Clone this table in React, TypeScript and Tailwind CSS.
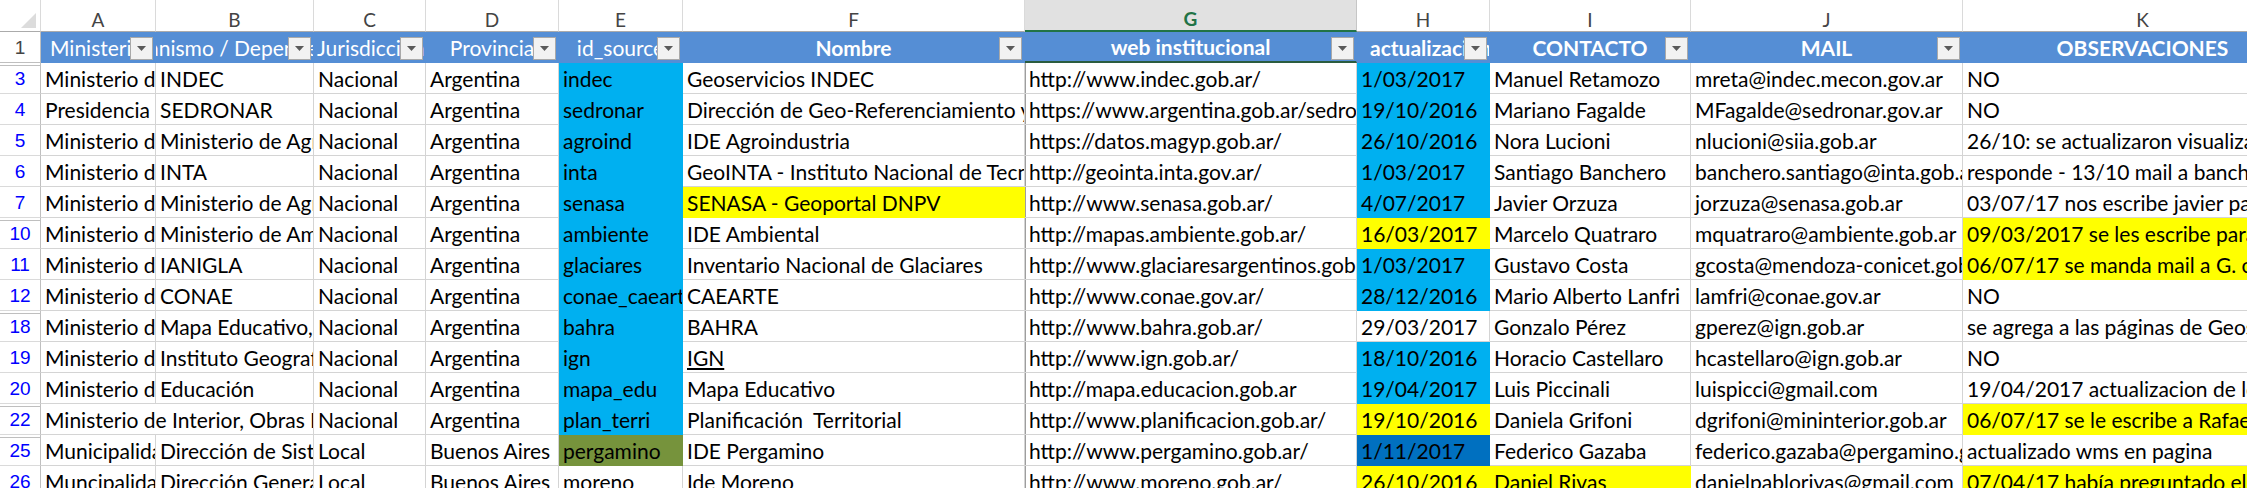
import React from "react";

type Fill = "c" | "y" | "o" | "b";
type CellDef = string | { t: string; f?: Fill; u?: boolean; span?: boolean };
type RowDef = { n: number; gap?: boolean; cells: CellDef[] };

const W = [
  "w-[115px]",
  "w-[158px]",
  "w-[112px]",
  "w-[133px]",
  "w-[124px]",
  "w-[342px]",
  "w-[332px]",
  "w-[133px]",
  "w-[201px]",
  "w-[272px]",
  "w-[360px]",
];

const FILL: Record<Fill, string> = {
  c: "bg-[#00B0F0] border-[#00B0F0]",
  y: "bg-[#FFFF00] border-[#FFFF00]",
  o: "bg-[#76933C] border-[#76933C]",
  b: "bg-[#0070C0] border-[#0070C0]",
};

const LETTERS = ["A", "B", "C", "D", "E", "F", "G", "H", "I", "J", "K"];

const HEAD: { t: string; align: string; bold?: boolean }[] = [
  { t: "Ministerio", align: "justify-start pl-[9px]" },
  { t: "Organismo / Dependencia", align: "justify-center" },
  { t: "Jurisdicción", align: "justify-start pl-[3px]" },
  { t: "Provincia", align: "justify-center" },
  { t: "id_source", align: "justify-center" },
  { t: "Nombre", align: "justify-center", bold: true },
  { t: "web institucional", align: "justify-center", bold: true },
  { t: "actualización", align: "justify-start pl-[13px]", bold: true },
  { t: "CONTACTO", align: "justify-center", bold: true },
  { t: "MAIL", align: "justify-center", bold: true },
  { t: "OBSERVACIONES", align: "justify-center", bold: true },
];

const ROWS: RowDef[] = [
  {
    n: 3,
    gap: true,
    cells: [
      "Ministerio de Economía",
      "INDEC",
      "Nacional",
      "Argentina",
      { t: "indec", f: "c" },
      "Geoservicios INDEC",
      "http://www.indec.gob.ar/",
      { t: "1/03/2017", f: "c" },
      "Manuel Retamozo",
      "mreta@indec.mecon.gov.ar",
      "NO",
    ],
  },
  {
    n: 4,
    cells: [
      "Presidencia de la Nación",
      "SEDRONAR",
      "Nacional",
      "Argentina",
      { t: "sedronar", f: "c" },
      "Dirección de Geo-Referenciamiento y Análisis",
      "https://www.argentina.gob.ar/sedronar",
      { t: "19/10/2016", f: "c" },
      "Mariano Fagalde",
      "MFagalde@sedronar.gov.ar",
      "NO",
    ],
  },
  {
    n: 5,
    cells: [
      "Ministerio de Agroindustria",
      "Ministerio de Agroindustria",
      "Nacional",
      "Argentina",
      { t: "agroind", f: "c" },
      "IDE Agroindustria",
      "https://datos.magyp.gob.ar/",
      { t: "26/10/2016", f: "c" },
      "Nora Lucioni",
      "nlucioni@siia.gob.ar",
      "26/10: se actualizaron visualizadores",
    ],
  },
  {
    n: 6,
    cells: [
      "Ministerio de Agroindustria",
      "INTA",
      "Nacional",
      "Argentina",
      { t: "inta", f: "c" },
      "GeoINTA - Instituto Nacional de Tecnología Agropecuaria",
      "http://geointa.inta.gov.ar/",
      { t: "1/03/2017", f: "c" },
      "Santiago Banchero",
      "banchero.santiago@inta.gob.ar",
      "responde - 13/10 mail a banchero",
    ],
  },
  {
    n: 7,
    cells: [
      "Ministerio de Agroindustria",
      "Ministerio de Agroindustria",
      "Nacional",
      "Argentina",
      { t: "senasa", f: "c" },
      { t: "SENASA - Geoportal DNPV", f: "y" },
      "http://www.senasa.gob.ar/",
      { t: "4/07/2017", f: "c" },
      "Javier Orzuza",
      "jorzuza@senasa.gob.ar",
      "03/07/17 nos escribe javier para",
    ],
  },
  {
    n: 10,
    gap: true,
    cells: [
      "Ministerio de Ambiente",
      "Ministerio de Ambiente y Desarrollo",
      "Nacional",
      "Argentina",
      { t: "ambiente", f: "c" },
      "IDE Ambiental",
      "http://mapas.ambiente.gob.ar/",
      { t: "16/03/2017", f: "y" },
      "Marcelo Quatraro",
      "mquatraro@ambiente.gob.ar",
      { t: "09/03/2017 se les escribe para actualizar", f: "y" },
    ],
  },
  {
    n: 11,
    cells: [
      "Ministerio de Ciencia",
      "IANIGLA",
      "Nacional",
      "Argentina",
      { t: "glaciares", f: "c" },
      "Inventario Nacional de Glaciares",
      "http://www.glaciaresargentinos.gob.ar/",
      { t: "1/03/2017", f: "c" },
      "Gustavo Costa",
      "gcosta@mendoza-conicet.gob.ar",
      { t: "06/07/17 se manda mail a G. costa", f: "y" },
    ],
  },
  {
    n: 12,
    cells: [
      "Ministerio de Ciencia",
      "CONAE",
      "Nacional",
      "Argentina",
      { t: "conae_caearte", f: "c" },
      "CAEARTE",
      "http://www.conae.gov.ar/",
      { t: "28/12/2016", f: "c" },
      "Mario Alberto Lanfri",
      "lamfri@conae.gov.ar",
      "NO",
    ],
  },
  {
    n: 18,
    gap: true,
    cells: [
      "Ministerio de Educación",
      "Mapa Educativo, Ministerio",
      "Nacional",
      "Argentina",
      { t: "bahra", f: "c" },
      "BAHRA",
      "http://www.bahra.gob.ar/",
      "29/03/2017",
      "Gonzalo Pérez",
      "gperez@ign.gob.ar",
      "se agrega a las páginas de Geoservicios",
    ],
  },
  {
    n: 19,
    cells: [
      "Ministerio de Defensa",
      "Instituto Geografico Nacional",
      "Nacional",
      "Argentina",
      { t: "ign", f: "c" },
      { t: "IGN", u: true },
      "http://www.ign.gob.ar/",
      { t: "18/10/2016", f: "c" },
      "Horacio Castellaro",
      "hcastellaro@ign.gob.ar",
      "NO",
    ],
  },
  {
    n: 20,
    cells: [
      "Ministerio de Educación",
      "Educación",
      "Nacional",
      "Argentina",
      { t: "mapa_edu", f: "c" },
      "Mapa Educativo",
      "http://mapa.educacion.gob.ar",
      { t: "19/04/2017", f: "c" },
      "Luis Piccinali",
      "luispicci@gmail.com",
      "19/04/2017 actualizacion de los",
    ],
  },
  {
    n: 22,
    gap: true,
    cells: [
      { t: "Ministerio de Interior, Obras Públicas y Vivienda", span: true },
      "Nacional",
      "Argentina",
      { t: "plan_terri", f: "c" },
      "Planificación\u00a0\u00a0Territorial",
      "http://www.planificacion.gob.ar/",
      { t: "19/10/2016", f: "y" },
      "Daniela Grifoni",
      "dgrifoni@mininterior.gob.ar",
      { t: "06/07/17 se le escribe a Rafael Jimenez", f: "y" },
    ],
  },
  {
    n: 25,
    gap: true,
    cells: [
      "Municipalidad de Pergamino",
      "Dirección de Sistemas",
      "Local",
      "Buenos Aires",
      { t: "pergamino", f: "o" },
      "IDE Pergamino",
      "http://www.pergamino.gob.ar/",
      { t: "1/11/2017", f: "b" },
      "Federico Gazaba",
      "federico.gazaba@pergamino.gob.ar",
      "actualizado wms en pagina",
    ],
  },
  {
    n: 26,
    cells: [
      "Muncipalidad de Moreno",
      "Dirección General de",
      "Local",
      "Buenos Aires",
      "moreno",
      "Ide Moreno",
      "http://www.moreno.gob.ar/",
      { t: "26/10/2016", f: "y" },
      { t: "Daniel Rivas", f: "y" },
      "danielpablorivas@gmail.com",
      { t: "07/04/17 había preguntado el estado", f: "y" },
    ],
  },
];

const FONT = "font-['Lato',sans-serif]";
const NUMFONT = "font-['Liberation_Sans',Arial,sans-serif]";

function FilterBtn() {
  return (
    <div className="absolute right-[2px] top-[5px] w-[23px] h-[23px] border border-[#a9a9a9] bg-[#f2f2f2] flex items-center justify-center">
      <svg width="9" height="5" viewBox="0 0 9 5">
        <path d="M0 0H9L4.5 5Z" fill="#5a5a5a" />
      </svg>
    </div>
  );
}

function ColumnHeaders() {
  return (
    <div className="flex h-[32px]">
      <div className="w-[41px] h-[32px] shrink-0 border-r border-b border-r-[#dadada] border-b-[#ababab] bg-white flex items-end justify-end pr-[4px] pb-[3px]">
        <svg width="15" height="15" viewBox="0 0 15 15">
          <polygon points="15,0 15,15 0,15" fill="#dcdcdc" />
        </svg>
      </div>
      {LETTERS.map((l, i) =>
        l === "G" ? (
          <div
            key={l}
            className={`${W[i]} shrink-0 h-[32px] border-r border-r-[#c6c6c6] border-b-2 border-b-[#217346] bg-[#e1e1e1] flex items-end justify-center leading-[22px] text-[19px] font-bold text-[#217346] ${FONT}`}
          >
            {l}
          </div>
        ) : (
          <div
            key={l}
            className={`${W[i]} shrink-0 h-[32px] border-r border-b border-r-[#dadada] border-b-[#ababab] bg-white flex items-end justify-center leading-[22px] text-[19px] text-[#444444] ${FONT}`}
          >
            {l}
          </div>
        )
      )}
    </div>
  );
}

function HeaderRow() {
  return (
    <div className="flex h-[31px]">
      <div
        className={`w-[41px] h-[31px] shrink-0 border-r border-b border-r-[#bfbfbf] border-b-[#bfbfbf] bg-white flex items-end justify-center pb-[3px] leading-[22px] text-[19px] text-[#444444] ${NUMFONT}`}
      >
        1
      </div>
      {HEAD.map((h, i) => (
        <div
          key={i}
          className={`${W[i]} relative shrink-0 h-[31px] overflow-hidden whitespace-nowrap border-r border-b bg-[#558ED5] ${
            i === 6 ? "border-r-[#558ED5] border-b-2 border-b-[#2a5c3f]" : "border-[#558ED5]"
          } flex items-end pb-[2px] leading-[24px] text-[21px] text-white ${h.bold ? "font-bold" : ""} ${h.align} ${FONT}`}
        >
          <span>{h.t}</span>
          <FilterBtn />
        </div>
      ))}
    </div>
  );
}

function DataRow({ row }: { row: RowDef }) {
  let col = 0;
  return (
    <div className="flex h-[31px]">
      <div
        className={`w-[41px] h-[31px] shrink-0 border-r border-b border-r-[#bfbfbf] border-b-[#dadada] bg-white flex items-end justify-center pb-[3px] leading-[22px] text-[19px] text-[#0000ff] ${NUMFONT} ${
          row.gap ? "shadow-[inset_0_2px_0_#ffffff,inset_0_3px_0_#bfbfbf]" : ""
        }`}
      >
        {row.n}
      </div>
      {row.cells.map((c, k) => {
        const d = typeof c === "string" ? { t: c } : c;
        const idx = col;
        col += d.span ? 2 : 1;
        const width = d.span ? "w-[273px]" : W[idx];
        const fill = d.f ? FILL[d.f] : "border-[#d4d4d4]";
        const leftDark = idx === 6 ? "shadow-[inset_1px_0_0_#9e9e9e]" : "";
        return (
          <div
            key={k}
            className={`${width} shrink-0 h-[31px] overflow-hidden whitespace-nowrap border-r border-b ${fill} ${leftDark} flex items-end pl-[4px] pb-[2px] leading-[24px] text-[21px] text-black ${FONT}`}
          >
            <span className={d.u ? "underline" : ""}>{d.t}</span>
          </div>
        );
      })}
    </div>
  );
}

export default function App() {
  return (
    <div className="w-[2247px] h-[488px] overflow-hidden bg-white">
      <div className="w-max">
        <ColumnHeaders />
        <HeaderRow />
        {ROWS.map((r) => (
          <DataRow key={r.n} row={r} />
        ))}
      </div>
    </div>
  );
}
